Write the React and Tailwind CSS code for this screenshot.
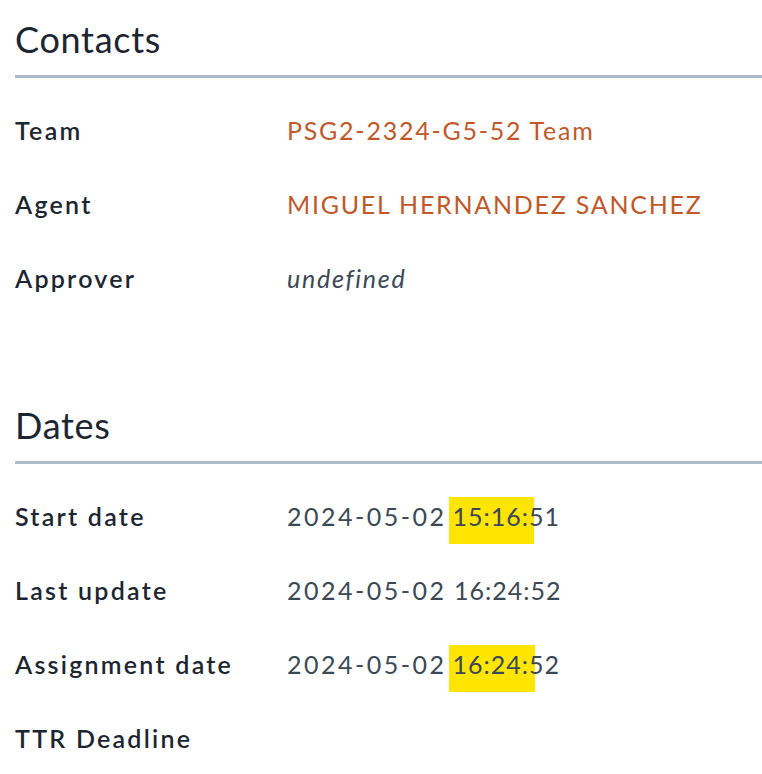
import React from 'react'

const contacts = [
  { label: 'Team', value: 'PSG2-2324-G5-52 Team', link: true },
  { label: 'Agent', value: 'MIGUEL HERNANDEZ SANCHEZ', link: true },
  { label: 'Approver', value: 'undefined', italic: true },
]

function Row({ label, children }) {
  return (
    <div className="flex items-center h-[74px]">
      <div className="w-[272px] shrink-0 font-semibold tracking-[0.09em] text-[#1c2630]">{label}</div>
      <div className="text-[#3b4856] whitespace-pre">{children}</div>
    </div>
  )
}

// highlighter marks; the trailing char is only partly covered
function Mark({ text, half, cut }) {
  return (
    <>
      <span className="bg-[#ffe500] pt-[4px] pb-[13px] pl-[4px] ml-[2px]">{text}</span>
      <span className={cut + ' pt-[4px] pb-[13px]'}>{half}</span>
    </>
  )
}

function Section({ title, children }) {
  return (
    <section>
      <h2 className="text-[36px] leading-none tracking-[0.02em] text-[#1c2630] pt-[21px] pb-[18px] border-b-[3px] border-[#adbac9]">
        {title}
      </h2>
      <div className="pt-[16px]">{children}</div>
    </section>
  )
}

function Day() {
  return <span className="tracking-[0.1em]">2024-05-02</span>
}

export default function App() {
  return (
    <div className="pl-[15px] bg-white min-h-[774px] text-[25px] tracking-[0.07em] font-['Lato','Liberation_Sans',sans-serif]">
      <Section title="Contacts">
        {contacts.map((c) => (
          <Row key={c.label} label={c.label}>
            <span className={c.link ? 'text-[#c0592a]' : c.italic ? 'italic' : ''}>{c.value}</span>
          </Row>
        ))}
      </Section>

      <div className="h-[70px]" />

      <Section title="Dates">
        <Row label="Start date">
          <Day />
          <span className="tracking-[0.04em]">
            <Mark text="15:16:" half="5" cut="bg-[linear-gradient(to_right,#ffe500_30%,transparent_30%)]" />1
          </span>
        </Row>
        <Row label="Last update">
          <Day />
          <span className="tracking-[0.04em]"> 16:24:52</span>
        </Row>
        <Row label="Assignment date">
          <Day />
          <span className="tracking-[0.04em]">
            <Mark text="16:24:" half="5" cut="bg-[linear-gradient(to_right,#ffe500_35%,transparent_35%)]" />2
          </span>
        </Row>
        <Row label="TTR Deadline" />
      </Section>
    </div>
  )
}
